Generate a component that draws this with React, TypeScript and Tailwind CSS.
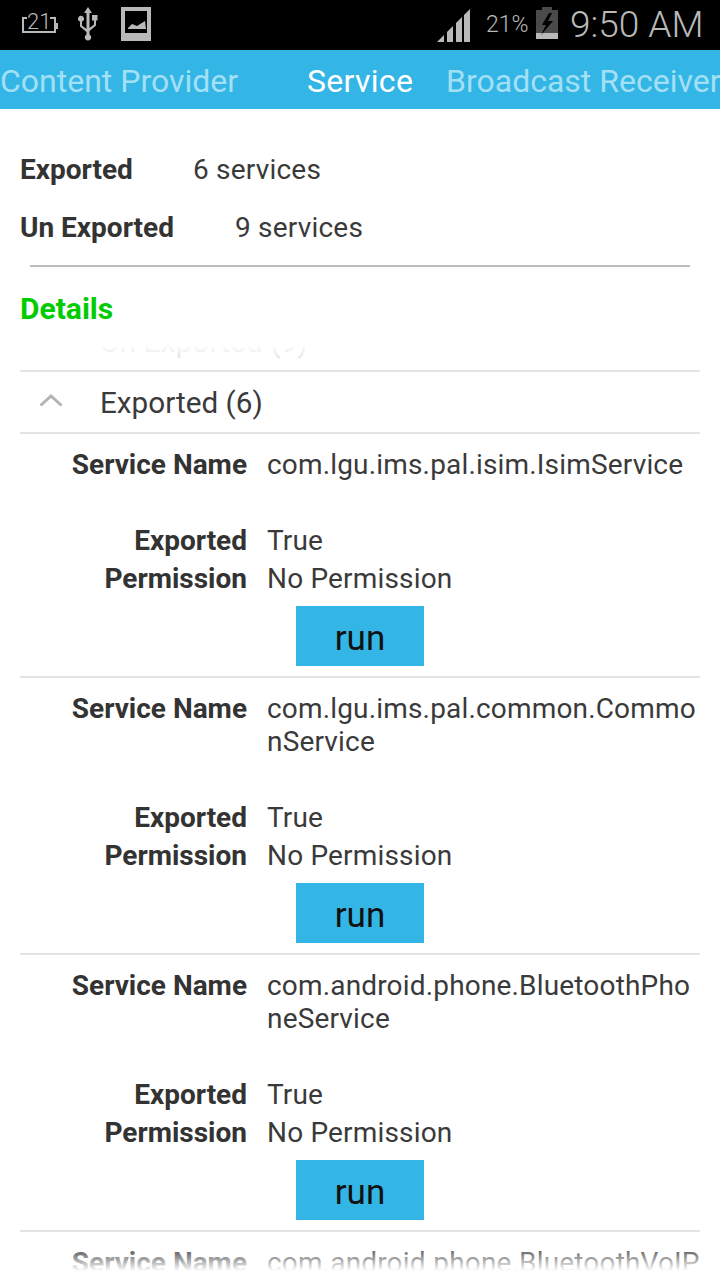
const font = { fontFamily: "Roboto, 'Noto Sans', sans-serif" };

function StatusBar() {
  return (
    <div className="h-[50px] bg-black flex items-start text-[#b9b9b9] shrink-0 relative">
      <div className="flex items-start pl-[22px] pt-[7px] w-[440px]">
        <svg width="36" height="28" viewBox="0 0 36 28" fill="none">
          <path d="M5 11 H1 V25 H33 V11 H28" stroke="#b9b9b9" strokeWidth="2" />
          <rect x="33" y="16" width="3" height="6" fill="#b9b9b9" />
          <text x="5" y="22" fontSize="22" fill="#b9b9b9" fontFamily="Roboto" fontWeight="300">21</text>
        </svg>
        <svg width="20" height="34" viewBox="0 0 20 34" fill="#b9b9b9" className="ml-[20px]">
          <path d="M10 0 L14 6 H11.5 V21 L16 17.5 V13.5 H14 V8 H19.5 V13.5 H18 V18.5 L11.5 24 V27.5 A3.2 3.2 0 1 1 8.5 27.5 V25 L2 19.5 V14.6 A3 3 0 1 1 4 14.6 V18.5 L8.5 22 V6 H6 Z" />
        </svg>
        <svg width="30" height="34" viewBox="0 0 30 34" className="ml-[23px]">
          <rect x="0" y="0" width="30" height="34" fill="#b9b9b9" />
          <rect x="4" y="4" width="22" height="22" fill="#000" />
          <path d="M7 21 L11 17 L16 19 L24 14 L25 22 H7 Z" fill="#b9b9b9" />
        </svg>
      </div>
      <svg width="34" height="34" viewBox="0 0 34 34" className="absolute left-[437px] top-[9px]">
        <path d="M0 33 L7 26 V33 Z" fill="#b9b9b9" />
        <path d="M10 33 V23 L16 17 V33 Z" fill="#b9b9b9" />
        <path d="M19 33 V14 L25 8 V33 Z" fill="#b9b9b9" />
        <path d="M27 33 V6 L33 0 V33 Z" fill="#b9b9b9" />
      </svg>
      <span className="absolute left-[486px] top-[11px] text-[23px] leading-[28px] font-light">21%</span>
      <svg width="22" height="32" viewBox="0 0 22 32" className="absolute left-[536px] top-[7px]">
        <rect x="6" y="0" width="10" height="3" fill="#4a4a4a" />
        <rect x="0" y="3" width="22" height="23" fill="#4a4a4a" />
        <rect x="0" y="26" width="22" height="6" fill="#b9b9b9" />
        <path d="M13 6 L6 18 H10 L5 28 L17 14 H12 L16 6 Z" fill="#000" />
      </svg>
      <span className="absolute left-[570px] top-[5px] text-[37px] leading-[40px] font-light">9:50 AM</span>
    </div>
  );
}

function Tabs() {
  return (
    <div className="h-[59px] bg-[#33b5e5] pt-[2px] overflow-hidden shrink-0 flex items-center text-[32px] leading-[36px] whitespace-nowrap text-[#a3e0f6]">
      <span className="w-[307px] shrink-0">Content Provider</span>
      <span className="text-white w-[139px] shrink-0 tracking-[0.3px]">Service</span>
      <span className="shrink-0">Broadcast Receiver</span>
    </div>
  );
}

function Row({ label, value, wrap }: { label: string; value: string; wrap?: boolean }) {
  return (
    <div className="flex text-[28px] leading-[33px]">
      <div className="w-[227px] shrink-0 text-right font-bold text-[#333333]">{label}</div>
      <div className={`ml-[20px] w-[433px] text-[#3a3a3a] tracking-[0.17px] ${wrap ? "break-all" : ""}`}>{value}</div>
    </div>
  );
}

function Item({ name, partial }: { name: string; partial?: boolean }) {
  return (
    <div className="border-t-2 border-[#e4e4e4]">
      <div className="pt-[14px]">
        <Row label="Service Name" value={name} wrap />
      </div>
      {!partial && (
        <>
          <div className="mt-[43px]">
            <Row label="Exported" value="True" />
          </div>
          <div className="mt-[5px]">
            <Row label="Permission" value="No Permission" />
          </div>
          <div className="flex justify-center mt-[11px] mb-[10px]">
            <div className="w-[128px] h-[60px] pt-[6px] bg-[#33b5e5] text-[#111] text-[35px] flex items-center justify-center">run</div>
          </div>
        </>
      )}
    </div>
  );
}

export default function App() {
  return (
    <div className="w-[720px] h-[1280px] bg-white overflow-hidden flex flex-col" style={font}>
      <StatusBar />
      <Tabs />
      <div className="px-[20px] pt-[44px] text-[28px] leading-[33px] text-[#3a3a3a]">
        <div className="flex">
          <span className="font-bold text-[#333333] w-[173px]">Exported</span>
          <span className="tracking-[0.2px]">6 services</span>
        </div>
        <div className="flex mt-[25px]">
          <span className="font-bold text-[#333333] w-[215px]">Un Exported</span>
          <span className="tracking-[0.2px]">9 services</span>
        </div>
      </div>
      <div className="mx-[30px] mt-[21px] h-[2px] bg-[#bdbdbd] shrink-0" />
      <div className="px-[20px] mt-[25px] text-[30px] leading-[34px] font-bold text-[#00cc00]">Details</div>
      <div className="relative mx-[20px] mt-[19px] h-[926px] overflow-hidden">
        <div className="h-[25px] overflow-hidden relative">
          <div className="pl-[80px] -mt-[23px] text-[30px] leading-[40px] text-[#c8c8c8]">Un Exported (9)</div>
        </div>
        <div className="border-t-2 border-[#e4e4e4] h-[62px] flex items-center">
          <svg width="24" height="14" viewBox="0 0 24 14" fill="none" className="ml-[19px] -mt-[4px]">
            <path d="M1.5 12.5 L12 3 L22.5 12.5" stroke="#b3b3b3" strokeWidth="3" />
          </svg>
          <span className="ml-[37px] pt-[1px] text-[29.7px] leading-[36px] text-[#3a3a3a]">Exported (6)</span>
        </div>
        <Item name="com.lgu.ims.pal.isim.IsimService" />
        <Item name="com.lgu.ims.pal.common.CommonService" />
        <Item name="com.android.phone.BluetoothPhoneService" />
        <Item name="com.android.phone.BluetoothVoIPService" partial />
        <div className="absolute top-0 left-0 right-0 h-[26px] bg-gradient-to-b from-white to-transparent" />
        <div className="absolute bottom-0 left-0 right-0 h-[26px] bg-gradient-to-t from-white to-transparent" />
      </div>
    </div>
  );
}
